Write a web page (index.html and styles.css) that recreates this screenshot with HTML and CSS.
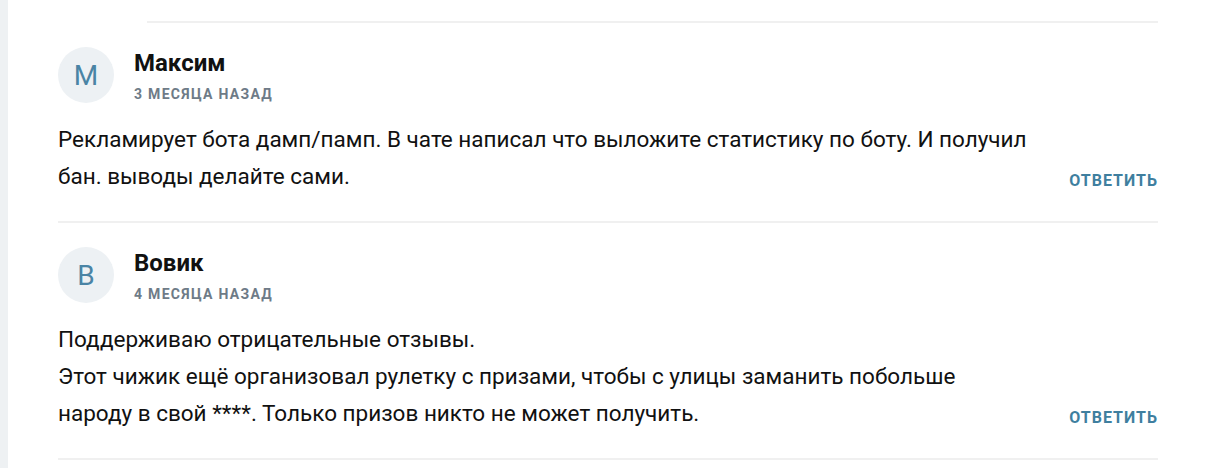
FILE: index.html
```html
<!DOCTYPE html>
<html lang="ru">
<head>
    <meta charset="UTF-8">
    <meta name="viewport" content="width=device-width, initial-scale=1.0">
    <title>Отзывы</title>
    <link rel="stylesheet" href="styles.css">
</head>
<body>
    <div class="page">
        <div class="comments">
            <div class="nested-end"></div>

            <div class="comment">
                <div class="comment-head">
                    <div class="avatar">М</div>
                    <div class="meta">
                        <div class="author">Максим</div>
                        <div class="date">3 месяца назад</div>
                    </div>
                </div>
                <div class="comment-body">
                    <p class="text">Рекламирует бота дамп/памп. В чате написал что выложите статистику по боту. И получил бан. выводы делайте сами.</p>
                    <a class="reply" href="#">Ответить</a>
                </div>
            </div>

            <div class="comment">
                <div class="comment-head">
                    <div class="avatar">В</div>
                    <div class="meta">
                        <div class="author">Вовик</div>
                        <div class="date">4 месяца назад</div>
                    </div>
                </div>
                <div class="comment-body">
                    <p class="text">Поддерживаю отрицательные отзывы.<br>Этот чижик ещё организовал рулетку с призами, чтобы с улицы заманить побольше<br>народу в свой ****. Только призов никто не может получить.</p>
                    <a class="reply" href="#">Ответить</a>
                </div>
            </div>
        </div>
    </div>
</body>
</html>
```

FILE: styles.css
```css
body {
    margin: 0;
    background-color: #eef1f3;
    font-family: Roboto, 'Liberation Sans', Arial, sans-serif;
    color: #111;
}
.page {
    margin-left: 8px;
    background-color: #fff;
    min-height: 468px;
    padding: 0 50px 0 50px;
}
.comments {
    padding-top: 21px;
}
.nested-end {
    margin-left: 89px;
    border-top: 2px solid #f0f0f0;
}
.comment {
    padding: 24px 0 26px;
    border-bottom: 2px solid #f0f0f0;
}
.comment-head {
    display: flex;
    align-items: center;
    gap: 20px;
}
.avatar {
    width: 56px;
    height: 56px;
    border-radius: 50%;
    background-color: #edf1f4;
    color: #4a84a5;
    font-size: 28px;
    display: flex;
    align-items: center;
    justify-content: center;
}
.author {
    font-size: 24px;
    font-weight: 700;
    line-height: 28px;
}
.date {
    margin-top: 9px;
    font-size: 14px;
    line-height: 16px;
    font-weight: 700;
    text-transform: uppercase;
    letter-spacing: 1.3px;
    color: #6e7b87;
}
.comment-body {
    display: flex;
    align-items: flex-end;
    gap: 30px;
    margin-top: 18px;
}
.text {
    flex: 1;
    margin: 0;
    font-size: 22.5px;
    line-height: 37px;
}
.reply {
    font-size: 16px;
    font-weight: 700;
    text-transform: uppercase;
    letter-spacing: 1px;
    color: #3f7f9f;
    text-decoration: none;
    line-height: 28px;
}
```
